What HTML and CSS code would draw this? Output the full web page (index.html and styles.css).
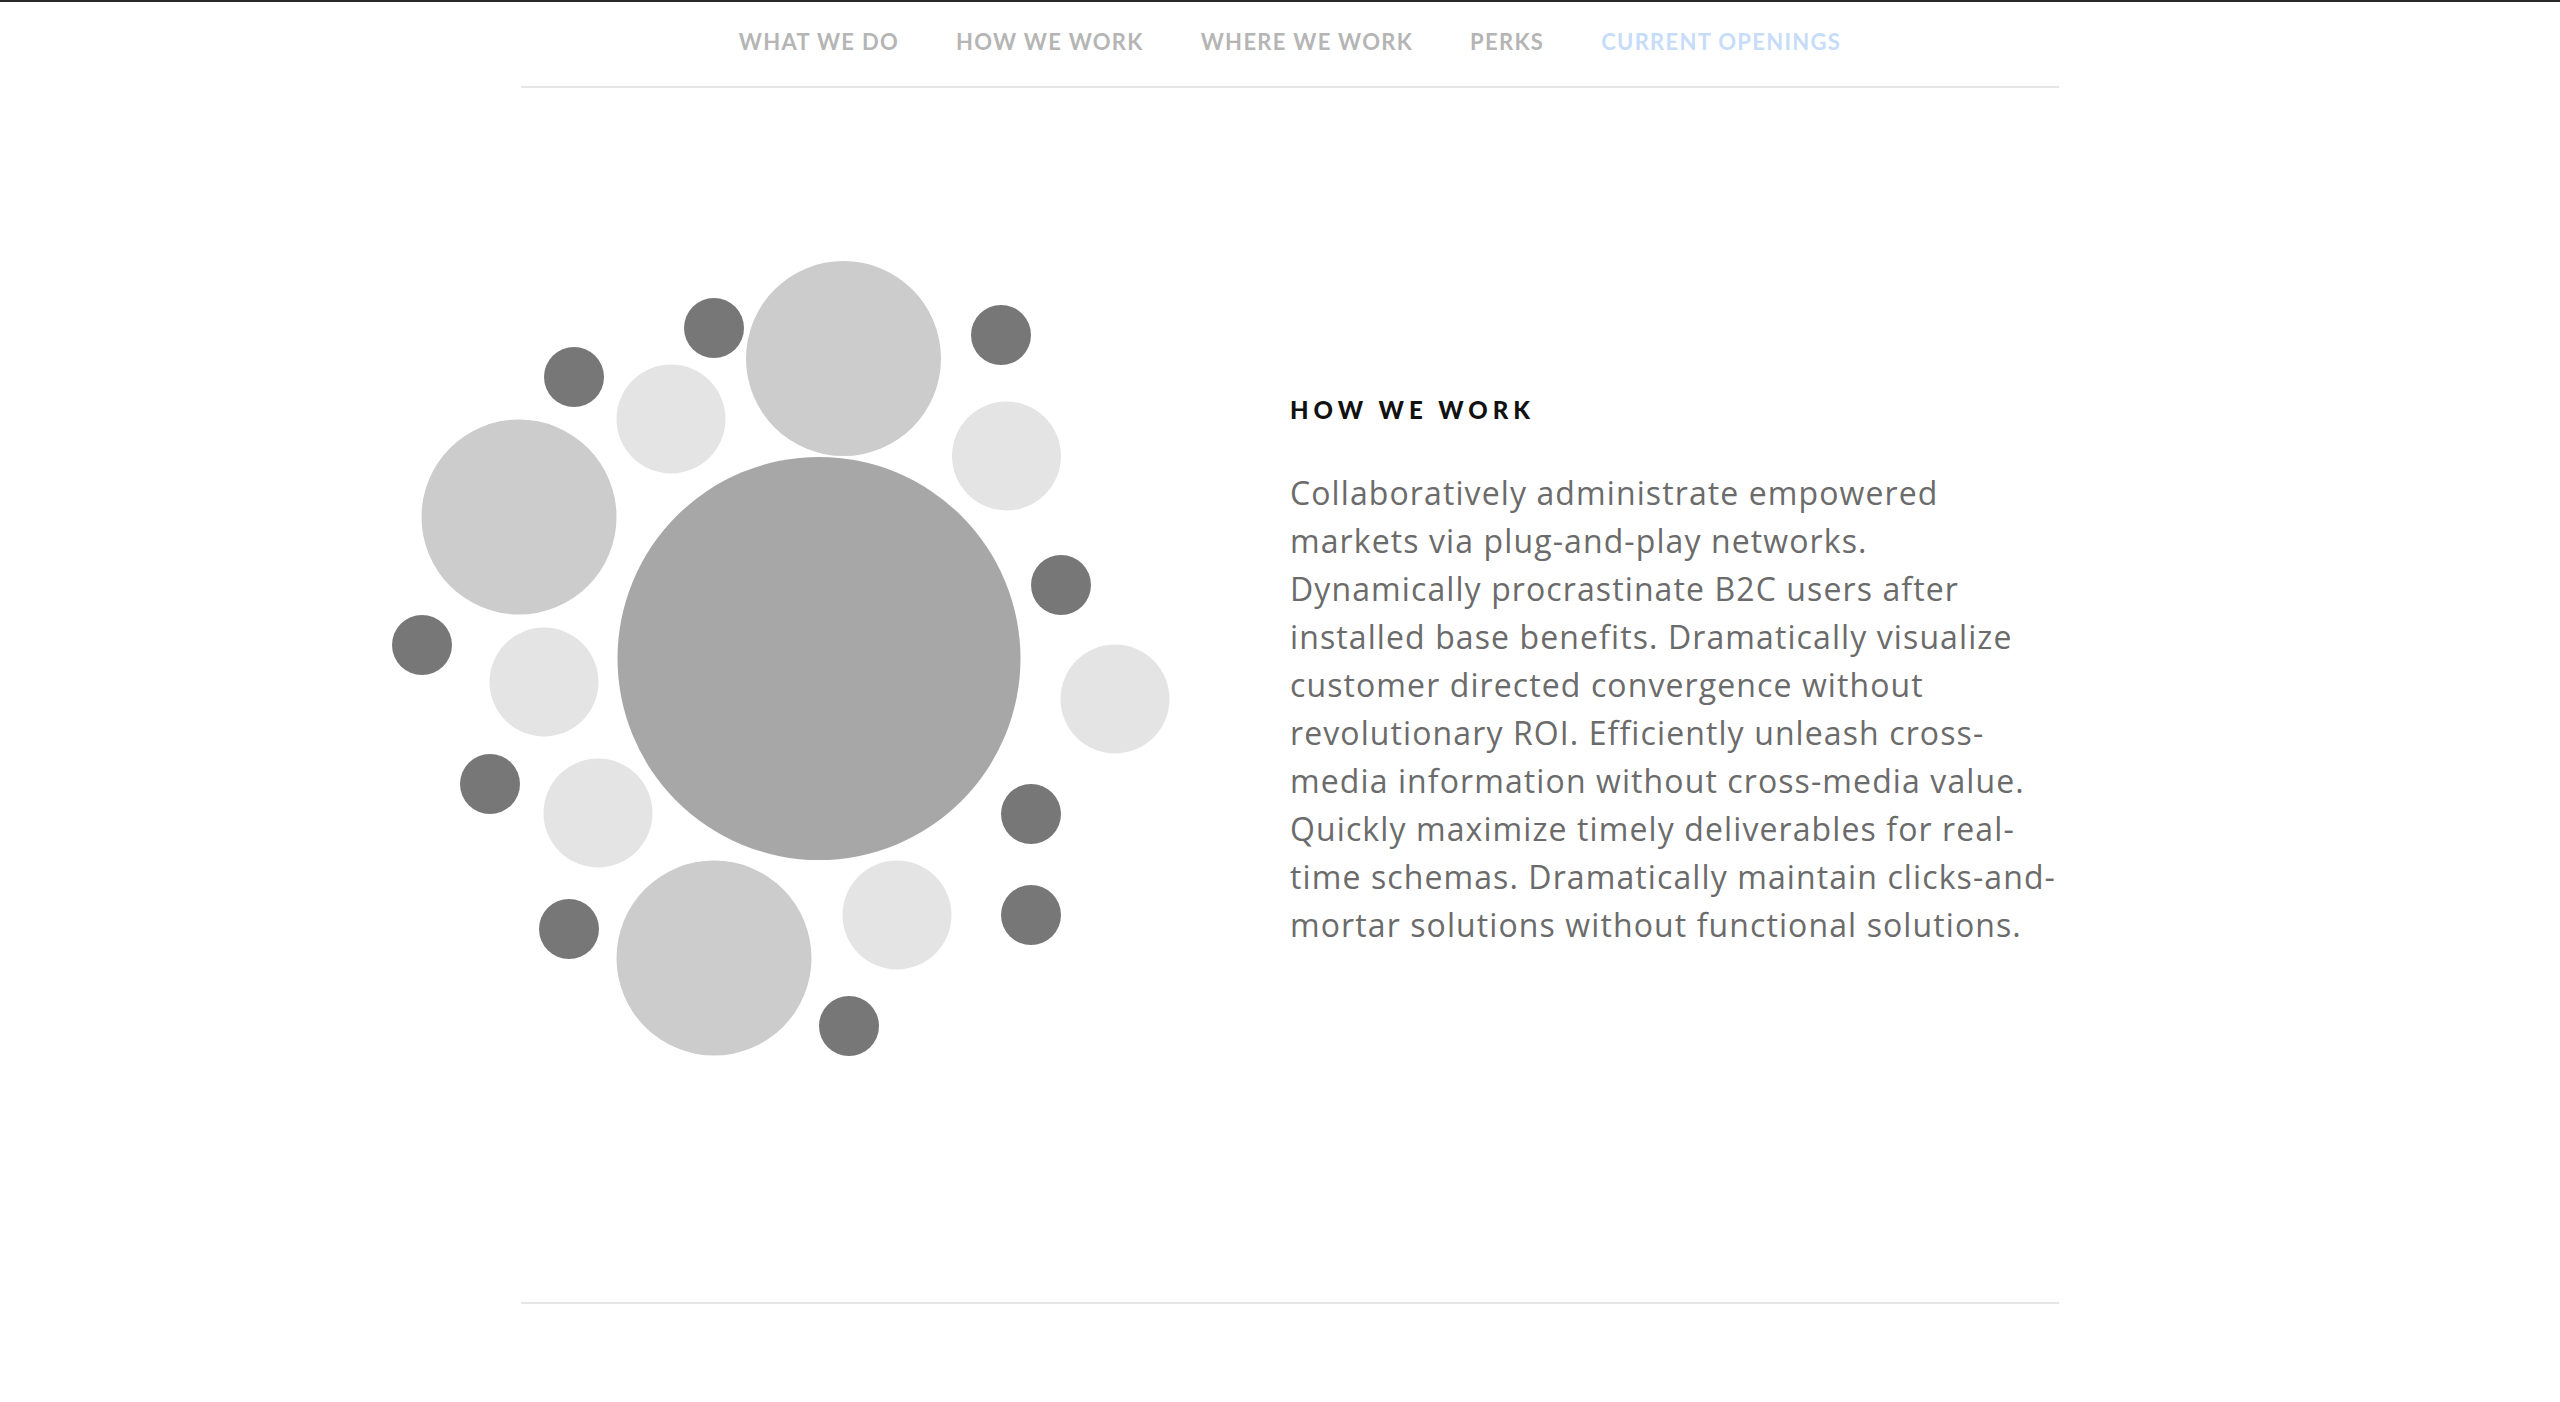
FILE: index.html
```html
<!DOCTYPE html>
<html lang="en">
<head>
<meta charset="utf-8">
<title>How we work</title>
<link rel="stylesheet" href="styles.css">
</head>
<body>
<header class="topbar">
  <div class="wrap nav-wrap">
    <nav class="nav">
      <a class="nav-link" href="#">WHAT WE DO</a>
      <a class="nav-link" href="#">HOW WE WORK</a>
      <a class="nav-link" href="#">WHERE WE WORK</a>
      <a class="nav-link" href="#">PERKS</a>
      <a class="nav-link nav-link-accent" href="#">CURRENT OPENINGS</a>
    </nav>
  </div>
</header>
<main class="wrap section">
  <div class="art">
    <svg class="bubbles" width="778" height="795" viewBox="392 261 778 795" aria-hidden="true">
      <circle class="c-big" cx="819" cy="658.5" r="201.5"/>
      <circle class="c-mid" cx="843.5" cy="358.5" r="97.5"/>
      <circle class="c-mid" cx="519" cy="517" r="97.5"/>
      <circle class="c-mid" cx="714" cy="958" r="97.5"/>
      <circle class="c-light" cx="671" cy="419" r="54.5"/>
      <circle class="c-light" cx="1006.5" cy="456" r="54.5"/>
      <circle class="c-light" cx="544" cy="682" r="54.5"/>
      <circle class="c-light" cx="1115" cy="699" r="54.5"/>
      <circle class="c-light" cx="598" cy="813" r="54.5"/>
      <circle class="c-light" cx="897" cy="915" r="54.5"/>
      <circle class="c-dark" cx="714" cy="328" r="30"/>
      <circle class="c-dark" cx="574" cy="377" r="30"/>
      <circle class="c-dark" cx="1001" cy="335" r="30"/>
      <circle class="c-dark" cx="1061" cy="585" r="30"/>
      <circle class="c-dark" cx="422" cy="645" r="30"/>
      <circle class="c-dark" cx="490" cy="784" r="30"/>
      <circle class="c-dark" cx="569" cy="929" r="30"/>
      <circle class="c-dark" cx="1031" cy="814" r="30"/>
      <circle class="c-dark" cx="1031" cy="915" r="30"/>
      <circle class="c-dark" cx="849" cy="1026" r="30"/>
    </svg>
  </div>
  <div class="copy">
    <h2 class="copy-title">HOW WE WORK</h2>
    <p class="copy-text">Collaboratively administrate empowered markets via plug-and-play networks. Dynamically procrastinate B2C users after installed base benefits. Dramatically visualize customer directed convergence without revolutionary ROI. Efficiently unleash cross-media information without cross-media value. Quickly maximize timely deliverables for real-time schemas. Dramatically maintain clicks-and-mortar solutions without functional solutions.</p>
  </div>
</main>
</body>
</html>
```
FILE: styles.css
```css
html, body {
  margin: 0;
  padding: 0;
  background: #ffffff;
}
body {
  border-top: 2px solid #2a2a2a;
  font-family: "Lato", "Liberation Sans", sans-serif;
}
.wrap {
  width: 1538px;
  margin-left: 521px;
}
.nav-wrap {
  border-bottom: 2px solid #e6e6e6;
  padding-top: 27px;
  padding-bottom: 31px;
}
.nav {
  display: flex;
  justify-content: center;
  gap: 57px;
}
.nav-link {
  font-family: "Lato", "Liberation Sans", sans-serif;
  font-weight: 700;
  font-size: 22px;
  line-height: 26px;
  letter-spacing: 1.3px;
  color: #b5b5b5;
  text-decoration: none;
}
.nav-link-accent {
  color: #c6dcf8;
}
.section {
  display: grid;
  grid-template-columns: 769px 769px;
  border-bottom: 2px solid #e6e6e6;
  height: 1216px;
  box-sizing: border-box;
}
.art {
  padding-top: 173px;
}
.bubbles {
  display: block;
  margin-left: -129px;
}
.c-big { fill: #a7a7a7; }
.c-mid { fill: #cccccc; }
.c-light { fill: #e4e4e4; }
.c-dark { fill: #777777; }
.copy {
  padding-top: 310px;
}
.copy-title {
  margin: 0;
  font-family: "Lato", "Liberation Sans", sans-serif;
  font-weight: 900;
  font-size: 24px;
  line-height: 24px;
  letter-spacing: 5px;
  color: #111111;
}
.copy-text {
  margin: 47px 0 0;
  font-family: "Open Sans", "Liberation Sans", sans-serif;
  font-weight: 400;
  font-size: 32px;
  line-height: 48px;
  letter-spacing: 1.1px;
  color: #6b6b6b;
}
```
